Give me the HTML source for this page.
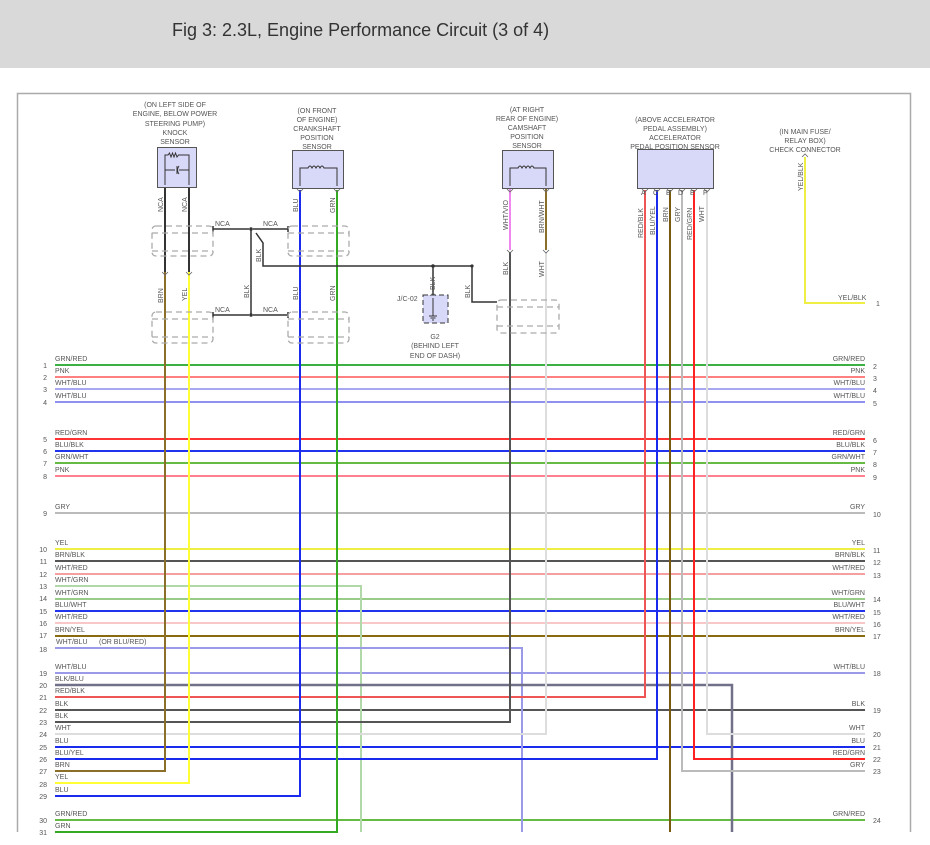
<!DOCTYPE html>
<html><head><meta charset="utf-8"><style>
html,body{margin:0;padding:0;background:#fff;width:930px;height:845px;overflow:hidden}
.hdr{position:absolute;left:0;top:0;width:930px;height:68px;background:#d9d9d9}
.hdr div{position:absolute;left:172px;top:20px;font:18px "Liberation Sans",sans-serif;color:#333}
svg{position:absolute;left:0;top:0}
text{font-family:"Liberation Sans",sans-serif;font-size:7px;fill:#555}
</style></head><body>
<div class="hdr"><div>Fig 3: 2.3L, Engine Performance Circuit (3 of 4)</div></div>
<svg width="930" height="845" viewBox="0 0 930 845">
<!-- frame -->
<path d="M17.5 832V93.5H910.5V832" fill="none" stroke="#aaa" stroke-width="1.5"/>

<!-- full lines -->
<g stroke-width="2" fill="none">
<path d="M55 365H865" stroke="#3cb043"/>
<path d="M55 377H865" stroke="#ff8080"/>
<path d="M55 389H865" stroke="#a8a8f0"/>
<path d="M55 402H865" stroke="#9090f0"/>
<path d="M55 439H865" stroke="#ff3333"/>
<path d="M55 451H865" stroke="#2233ee"/>
<path d="M55 463H865" stroke="#66bb44"/>
<path d="M55 476H865" stroke="#ff8090"/>
<path d="M55 513H865" stroke="#bbbbbb"/>
<path d="M55 549H865" stroke="#eeee44"/>
<path d="M55 561H865" stroke="#555555"/>
<path d="M55 574H865" stroke="#f4a0a0"/>
<path d="M55 599H865" stroke="#99cc88"/>
<path d="M55 611H865" stroke="#2233ee"/>
<path d="M55 623H865" stroke="#f8c8c8"/>
<path d="M55 636H865" stroke="#8a6a10"/>
<path d="M55 673H865" stroke="#9a9ae8"/>
<path d="M55 710H865" stroke="#555555"/>
<path d="M55 747H865" stroke="#1a2aee"/>
<path d="M55 820H865" stroke="#66bb44"/>
<!-- partial -->
<path d="M55 586H361V832" stroke="#b0d8a8"/>
<path d="M55 648H522V832" stroke="#9a9ae8"/>
<path d="M55 685H732V832" stroke="#707088" stroke-width="2.5"/>
<path d="M55 697H645V190" stroke="#ee5555"/>
<path d="M55 722H510V252" stroke="#555555"/>
<path d="M55 734H546V252" stroke="#dddddd"/>
<path d="M55 759H657V190" stroke="#1a2aee"/>
<path d="M55 771H165V272" stroke="#8b6e2a"/>
<path d="M55 783H189V272" stroke="#ffff33"/>
<path d="M55 796H300V190" stroke="#1a2aee"/>
<path d="M55 832H337V190" stroke="#33aa22"/>
<path d="M865 734H707V190" stroke="#dddddd"/>
<path d="M865 759H694V190" stroke="#ff2222"/>
<path d="M865 771H682V190" stroke="#bbbbbb"/>
<path d="M670 190V832" stroke="#7a5a10"/>
<path d="M865 303H805V157" stroke="#eeee44"/>
<path d="M510 188V250" stroke="#ee88ee"/>
<path d="M546 188V250" stroke="#8b6e2a"/>
<path d="M165 187V272M189 187V272" stroke="#333"/>
</g>

<!-- black wiring -->
<g stroke="#333" stroke-width="1.5" fill="none">
<path d="M213 229H249M253 229H288M213 315H249M253 315H288M251 229V315"/>
<path d="M256 233L263 243V266H472V302H497"/>
<path d="M433 266V298"/>
<path d="M213 226V232M288 226V232M213 312V318M288 312V318"/>
</g>
<g fill="#333"><circle cx="251" cy="229" r="1.8"/><circle cx="251" cy="315" r="1.8"/><circle cx="433" cy="266" r="1.8"/><circle cx="472" cy="266" r="1.6"/></g>

<!-- shields -->
<g stroke="#aaa" stroke-width="1.3" fill="none" stroke-dasharray="6 4">
<rect x="152" y="226" width="61" height="30" rx="4"/><path d="M152 233H213M152 251H213"/>
<rect x="288" y="226" width="61" height="30" rx="4"/><path d="M288 233H349M288 251H349"/>
<rect x="152" y="312" width="61" height="31" rx="4"/><path d="M152 319H213M152 337H213"/>
<rect x="288" y="312" width="61" height="31" rx="4"/><path d="M288 319H349M288 337H349"/>
<rect x="497" y="300" width="62" height="33" rx="4"/><path d="M497 307H559M497 326H559"/>
</g>

<!-- components -->
<g stroke="#555" stroke-width="1" fill="#d8d8f8">
<rect x="157.5" y="147.5" width="39" height="40"/>
<rect x="292.5" y="150.5" width="51" height="38"/>
<rect x="502.5" y="150.5" width="51" height="38"/>
<rect x="637.5" y="149.5" width="76" height="39"/>
</g>
<rect x="423" y="295" width="25" height="28" fill="#d8d8f8" stroke="#333" stroke-dasharray="5 3"/>
<g stroke="#333" fill="none" stroke-width="1">
<path d="M165 185V155H168l1.5-2 1.5 4 1.5-4 1.5 4 1.5-4 1.5 4 1.5-2H189V185"/>
<path d="M165 170H175M177 166V174M179 166Q176 170 179 174M179 170H189"/>
<path d="M300 186V168H308q2-4 4 0q2-4 4 0q2-4 4 0q2-4 4 0H337V186"/>
<path d="M510 186V168H518q2-4 4 0q2-4 4 0q2-4 4 0q2-4 4 0H546V186"/>
<path d="M433 298V316M429 316H437M430.5 318H435.5M432 320H434"/>
</g>
<g stroke="#666" fill="none" stroke-width="0.8">
<path d="M162 272l3 3 3-3M186 272l3 3 3-3M297 189l3 3 3-3M334 189l3 3 3-3M507 189l3 3 3-3M543 189l3 3 3-3M507 250l3 3 3-3M543 250l3 3 3-3M642 189l3 3 3-3M654 189l3 3 3-3M667 189l3 3 3-3M679 189l3 3 3-3M691 189l3 3 3-3M704 189l3 3 3-3M802 157l3-3 3 3M430 296l3-3 3 3"/>
</g>

<!-- component texts -->
<g text-anchor="middle">
<text x="175" y="107">(ON LEFT SIDE OF</text>
<text x="175" y="116">ENGINE, BELOW POWER</text>
<text x="175" y="126">STEERING PUMP)</text>
<text x="175" y="135">KNOCK</text>
<text x="175" y="144">SENSOR</text>
<text x="317" y="113">(ON FRONT</text>
<text x="317" y="122">OF ENGINE)</text>
<text x="317" y="131">CRANKSHAFT</text>
<text x="317" y="140">POSITION</text>
<text x="317" y="149">SENSOR</text>
<text x="527" y="112">(AT RIGHT</text>
<text x="527" y="121">REAR OF ENGINE)</text>
<text x="527" y="130">CAMSHAFT</text>
<text x="527" y="139">POSITION</text>
<text x="527" y="148">SENSOR</text>
<text x="675" y="122">(ABOVE ACCELERATOR</text>
<text x="675" y="131">PEDAL ASSEMBLY)</text>
<text x="675" y="140">ACCELERATOR</text>
<text x="675" y="149">PEDAL POSITION SENSOR</text>
<text x="805" y="134">(IN MAIN FUSE/</text>
<text x="805" y="143">RELAY BOX)</text>
<text x="805" y="152">CHECK CONNECTOR</text>
<text x="435" y="339">G2</text>
<text x="435" y="348">(BEHIND LEFT</text>
<text x="435" y="358">END OF DASH)</text>
</g>
<text x="397" y="301">J/C-02</text>
<text x="215" y="226">NCA</text><text x="263" y="226">NCA</text>
<text x="215" y="312">NCA</text><text x="263" y="312">NCA</text>
<text x="838" y="300">YEL/BLK</text>
<text x="876" y="306">1</text>
<text x="641" y="195" font-size="6">A</text><text x="653" y="195" font-size="6">C</text><text x="666" y="195" font-size="6">B</text><text x="678" y="195" font-size="6">D</text><text x="690" y="195" font-size="6">E</text><text x="703" y="195" font-size="6">F</text>

<!-- rotated wire labels -->
<g>
<text transform="translate(163,212) rotate(-90)">NCA</text>
<text transform="translate(187,212) rotate(-90)">NCA</text>
<text transform="translate(163,303) rotate(-90)">BRN</text>
<text transform="translate(187,301) rotate(-90)">YEL</text>
<text transform="translate(298,212) rotate(-90)">BLU</text>
<text transform="translate(335,213) rotate(-90)">GRN</text>
<text transform="translate(298,300) rotate(-90)">BLU</text>
<text transform="translate(335,301) rotate(-90)">GRN</text>
<text transform="translate(249,298) rotate(-90)">BLK</text>
<text transform="translate(261,262) rotate(-90)">BLK</text>
<text transform="translate(435,290) rotate(-90)">BLK</text>
<text transform="translate(470,298) rotate(-90)">BLK</text>
<text transform="translate(508,230) rotate(-90)">WHT/VIO</text>
<text transform="translate(544,233) rotate(-90)">BRN/WHT</text>
<text transform="translate(508,275) rotate(-90)">BLK</text>
<text transform="translate(544,277) rotate(-90)">WHT</text>
<text transform="translate(643,238) rotate(-90)">RED/BLK</text>
<text transform="translate(655,235) rotate(-90)">BLU/YEL</text>
<text transform="translate(668,222) rotate(-90)">BRN</text>
<text transform="translate(680,222) rotate(-90)">GRY</text>
<text transform="translate(692,240) rotate(-90)">RED/GRN</text>
<text transform="translate(704,222) rotate(-90)">WHT</text>
<text transform="translate(803,191) rotate(-90)">YEL/BLK</text>
</g>

<!-- left labels -->
<g>
<text x="55" y="361">GRN/RED</text><text x="55" y="373">PNK</text><text x="55" y="385">WHT/BLU</text><text x="55" y="398">WHT/BLU</text>
<text x="55" y="435">RED/GRN</text><text x="55" y="447">BLU/BLK</text><text x="55" y="459">GRN/WHT</text><text x="55" y="472">PNK</text>
<text x="55" y="509">GRY</text><text x="55" y="545">YEL</text><text x="55" y="557">BRN/BLK</text><text x="55" y="570">WHT/RED</text>
<text x="55" y="582">WHT/GRN</text><text x="55" y="595">WHT/GRN</text><text x="55" y="607">BLU/WHT</text><text x="55" y="619">WHT/RED</text>
<text x="55" y="632">BRN/YEL</text><text x="56" y="644">WHT/BLU</text><text x="99" y="644">(OR BLU/RED)</text>
<text x="55" y="669">WHT/BLU</text><text x="55" y="681">BLK/BLU</text><text x="55" y="693">RED/BLK</text><text x="55" y="706">BLK</text>
<text x="55" y="718">BLK</text><text x="55" y="730">WHT</text><text x="55" y="743">BLU</text><text x="55" y="755">BLU/YEL</text>
<text x="55" y="767">BRN</text><text x="55" y="779">YEL</text><text x="55" y="792">BLU</text><text x="55" y="816">GRN/RED</text><text x="55" y="828">GRN</text>
</g>
<g text-anchor="end">
<text x="47" y="368">1</text><text x="47" y="380">2</text><text x="47" y="392">3</text><text x="47" y="405">4</text>
<text x="47" y="442">5</text><text x="47" y="454">6</text><text x="47" y="466">7</text><text x="47" y="479">8</text>
<text x="47" y="516">9</text><text x="47" y="552">10</text><text x="47" y="564">11</text><text x="47" y="577">12</text>
<text x="47" y="589">13</text><text x="47" y="601">14</text><text x="47" y="614">15</text><text x="47" y="626">16</text>
<text x="47" y="638">17</text><text x="47" y="652">18</text><text x="47" y="676">19</text><text x="47" y="688">20</text>
<text x="47" y="700">21</text><text x="47" y="713">22</text><text x="47" y="725">23</text><text x="47" y="737">24</text>
<text x="47" y="750">25</text><text x="47" y="762">26</text><text x="47" y="774">27</text><text x="47" y="787">28</text>
<text x="47" y="799">29</text><text x="47" y="823">30</text><text x="47" y="835">31</text>
<!-- right labels -->
<text x="865" y="361">GRN/RED</text><text x="865" y="373">PNK</text><text x="865" y="385">WHT/BLU</text><text x="865" y="398">WHT/BLU</text>
<text x="865" y="435">RED/GRN</text><text x="865" y="447">BLU/BLK</text><text x="865" y="459">GRN/WHT</text><text x="865" y="472">PNK</text>
<text x="865" y="509">GRY</text><text x="865" y="545">YEL</text><text x="865" y="557">BRN/BLK</text><text x="865" y="570">WHT/RED</text>
<text x="865" y="595">WHT/GRN</text><text x="865" y="607">BLU/WHT</text><text x="865" y="619">WHT/RED</text><text x="865" y="632">BRN/YEL</text>
<text x="865" y="669">WHT/BLU</text><text x="865" y="706">BLK</text><text x="865" y="730">WHT</text><text x="865" y="743">BLU</text>
<text x="865" y="755">RED/GRN</text><text x="865" y="767">GRY</text><text x="865" y="816">GRN/RED</text>
</g>
<g>
<text x="873" y="369">2</text><text x="873" y="381">3</text><text x="873" y="393">4</text><text x="873" y="406">5</text>
<text x="873" y="443">6</text><text x="873" y="455">7</text><text x="873" y="467">8</text><text x="873" y="480">9</text>
<text x="873" y="517">10</text><text x="873" y="553">11</text><text x="873" y="565">12</text><text x="873" y="578">13</text>
<text x="873" y="602">14</text><text x="873" y="615">15</text><text x="873" y="627">16</text><text x="873" y="639">17</text>
<text x="873" y="676">18</text><text x="873" y="713">19</text><text x="873" y="737">20</text><text x="873" y="750">21</text>
<text x="873" y="762">22</text><text x="873" y="774">23</text><text x="873" y="823">24</text>
</g>
</svg>
</body></html>
